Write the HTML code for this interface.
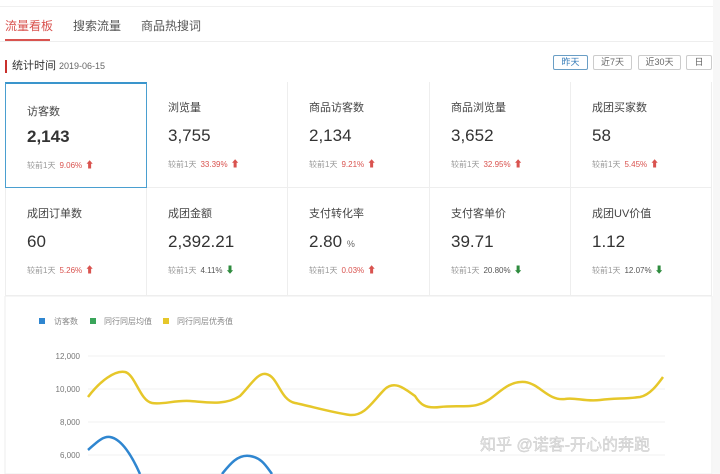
<!DOCTYPE html>
<html><head><meta charset="utf-8"><style>
*{margin:0;padding:0;box-sizing:border-box}
body{width:720px;height:474px;overflow:hidden;background:#f7f7f7;font-family:"Liberation Sans","Noto Sans CJK SC",sans-serif;position:relative}
.main{position:absolute;left:0;top:0;width:713px;height:474px;background:#fff}
.tab{position:absolute;top:17px;font-size:12px;color:#555}
.ul{position:absolute;left:5px;top:39px;width:45px;height:2px;background:#d9534f}
.line{position:absolute;left:0;top:41px;width:713px;height:1px;background:#eee}
.hd{position:absolute;left:5px;top:60px;border-left:2px solid #c9302c;padding-left:5px;font-size:11px;color:#333;line-height:13px}
.hd span{font-size:9px;color:#666;margin-left:3px}
.btn{position:absolute;top:55px;height:15px;border:1px solid #ccc;font-size:9px;color:#666;text-align:center;line-height:13px;border-radius:2px}
.card{position:absolute;border-right:1px solid #eee;border-bottom:1px solid #eee}
.card .t{position:absolute;left:21px;top:17px;font-size:11px;color:#444}
.card .v{position:absolute;left:21px;top:44px;font-size:17px;color:#333}
.card .c{position:absolute;left:21px;top:75px;font-size:8px;color:#999;white-space:nowrap}
.r{color:#d9534f;margin-left:4px}.g{color:#555;margin-left:4px}
.ar{color:#d9534f;font-size:9px;margin-left:3px}.ag{color:#2e8b3e;font-size:9px;margin-left:3px}
</style></head><body><div class="main">
<div style="position:absolute;left:0;top:6px;width:713px;height:1px;background:#f0f0f0"></div>
<div class="tab" style="left:5px;color:#d9534f">流量看板</div>
<div class="tab" style="left:73px">搜索流量</div>
<div class="tab" style="left:141px">商品热搜词</div>
<div class="ul"></div><div class="line"></div>
<div class="hd">统计时间<span>2019-06-15</span></div>
<div class="btn" style="left:553px;width:35px;border-color:#6a9ec5;color:#337ab7">昨天</div>
<div class="btn" style="left:593px;width:39px">近7天</div>
<div class="btn" style="left:638px;width:43px">近30天</div>
<div class="btn" style="left:686px;width:26px">日</div>

<div class="card" style="left:5px;top:82px;width:142px;height:106px;border:1px solid #4a9fd0;border-top:2px solid #3a95cc"><div class="t" style="top:19px">访客数</div><div class="v" style="font-weight:bold;top:43px">2,143</div><div class="c" style="top:74px">较前1天<span class="r">9.06%</span><span class="ar">⬆</span></div></div>
<div class="card" style="left:147px;top:82px;width:141px;height:106px"><div class="t">浏览量</div><div class="v">3,755</div><div class="c">较前1天<span class="r">33.39%</span><span class="ar">⬆</span></div></div>
<div class="card" style="left:288px;top:82px;width:142px;height:106px"><div class="t">商品访客数</div><div class="v">2,134</div><div class="c">较前1天<span class="r">9.21%</span><span class="ar">⬆</span></div></div>
<div class="card" style="left:430px;top:82px;width:141px;height:106px"><div class="t">商品浏览量</div><div class="v">3,652</div><div class="c">较前1天<span class="r">32.95%</span><span class="ar">⬆</span></div></div>
<div class="card" style="left:571px;top:82px;width:141px;height:106px"><div class="t">成团买家数</div><div class="v">58</div><div class="c">较前1天<span class="r">5.45%</span><span class="ar">⬆</span></div></div>

<div class="card" style="left:5px;top:188px;width:142px;height:108px;border-left:1px solid #eee"><div class="t">成团订单数</div><div class="v">60</div><div class="c">较前1天<span class="r">5.26%</span><span class="ar">⬆</span></div></div>
<div class="card" style="left:147px;top:188px;width:141px;height:108px"><div class="t">成团金额</div><div class="v">2,392.21</div><div class="c">较前1天<span class="g">4.11%</span><span class="ag">⬇</span></div></div>
<div class="card" style="left:288px;top:188px;width:142px;height:108px"><div class="t">支付转化率</div><div class="v">2.80 <span style="font-size:9px;color:#666">%</span></div><div class="c">较前1天<span class="r">0.03%</span><span class="ar">⬆</span></div></div>
<div class="card" style="left:430px;top:188px;width:141px;height:108px"><div class="t">支付客单价</div><div class="v">39.71</div><div class="c">较前1天<span class="g">20.80%</span><span class="ag">⬇</span></div></div>
<div class="card" style="left:571px;top:188px;width:141px;height:108px"><div class="t">成团UV价值</div><div class="v">1.12</div><div class="c">较前1天<span class="g">12.07%</span><span class="ag">⬇</span></div></div>

<svg style="position:absolute;left:0;top:296px" width="713" height="178" font-family="Liberation Sans,Noto Sans CJK SC,sans-serif">
<rect x="5" y="0" width="707" height="178" fill="none" stroke="#eee"/>
<rect x="39" y="22" width="6" height="6" fill="#2f86d0"/><text x="54" y="28" font-size="8" fill="#888">访客数</text>
<rect x="90" y="22" width="6" height="6" fill="#3aa55a"/><text x="104" y="28" font-size="8" fill="#888">同行同层均值</text>
<rect x="163" y="22" width="6" height="6" fill="#e6c72a"/><text x="177" y="28" font-size="8" fill="#888">同行同层优秀值</text>
<g stroke="#f2f2f2"><line x1="88" y1="60" x2="665" y2="60"/><line x1="88" y1="93" x2="665" y2="93"/><line x1="88" y1="126" x2="665" y2="126"/><line x1="88" y1="159" x2="665" y2="159"/></g>
<g font-size="8" fill="#777" text-anchor="end"><text x="80" y="63">12,000</text><text x="80" y="96">10,000</text><text x="80" y="129">8,000</text><text x="80" y="162">6,000</text></g>
<path d="M88 101 C100 85,115 74,125 76 C135 78,140 105,152 107 C162 109,175 104,190 105 C205 106,225 110,240 100 C250 90,258 76,266 78 C278 80,280 104,295 107 C310 110,330 116,350 119 C365 120,372 106,385 93 C395 84,405 93,415 100 C420 108,425 113,440 111 C455 109,470 112,480 108 C495 104,505 84,525 86 C540 88,548 105,565 103 C575 101,585 106,600 104 C615 102,625 103,640 101 C650 99,658 88,663 81" fill="none" stroke="#e6c72a" stroke-width="2.5"/>
<path d="M88 154 C95 148,102 140,110 141 C122 143,132 160,140 178 M222 178 C230 168,238 158,250 160 C262 162,266 170,272 178" fill="none" stroke="#2f86d0" stroke-width="2.5"/>
<text x="480" y="154" font-size="16" fill="#e4e4e4" stroke="#c4c4c4" stroke-width="0.4">知乎 @诺客-开心的奔跑</text>
</svg>
</div></body></html>
